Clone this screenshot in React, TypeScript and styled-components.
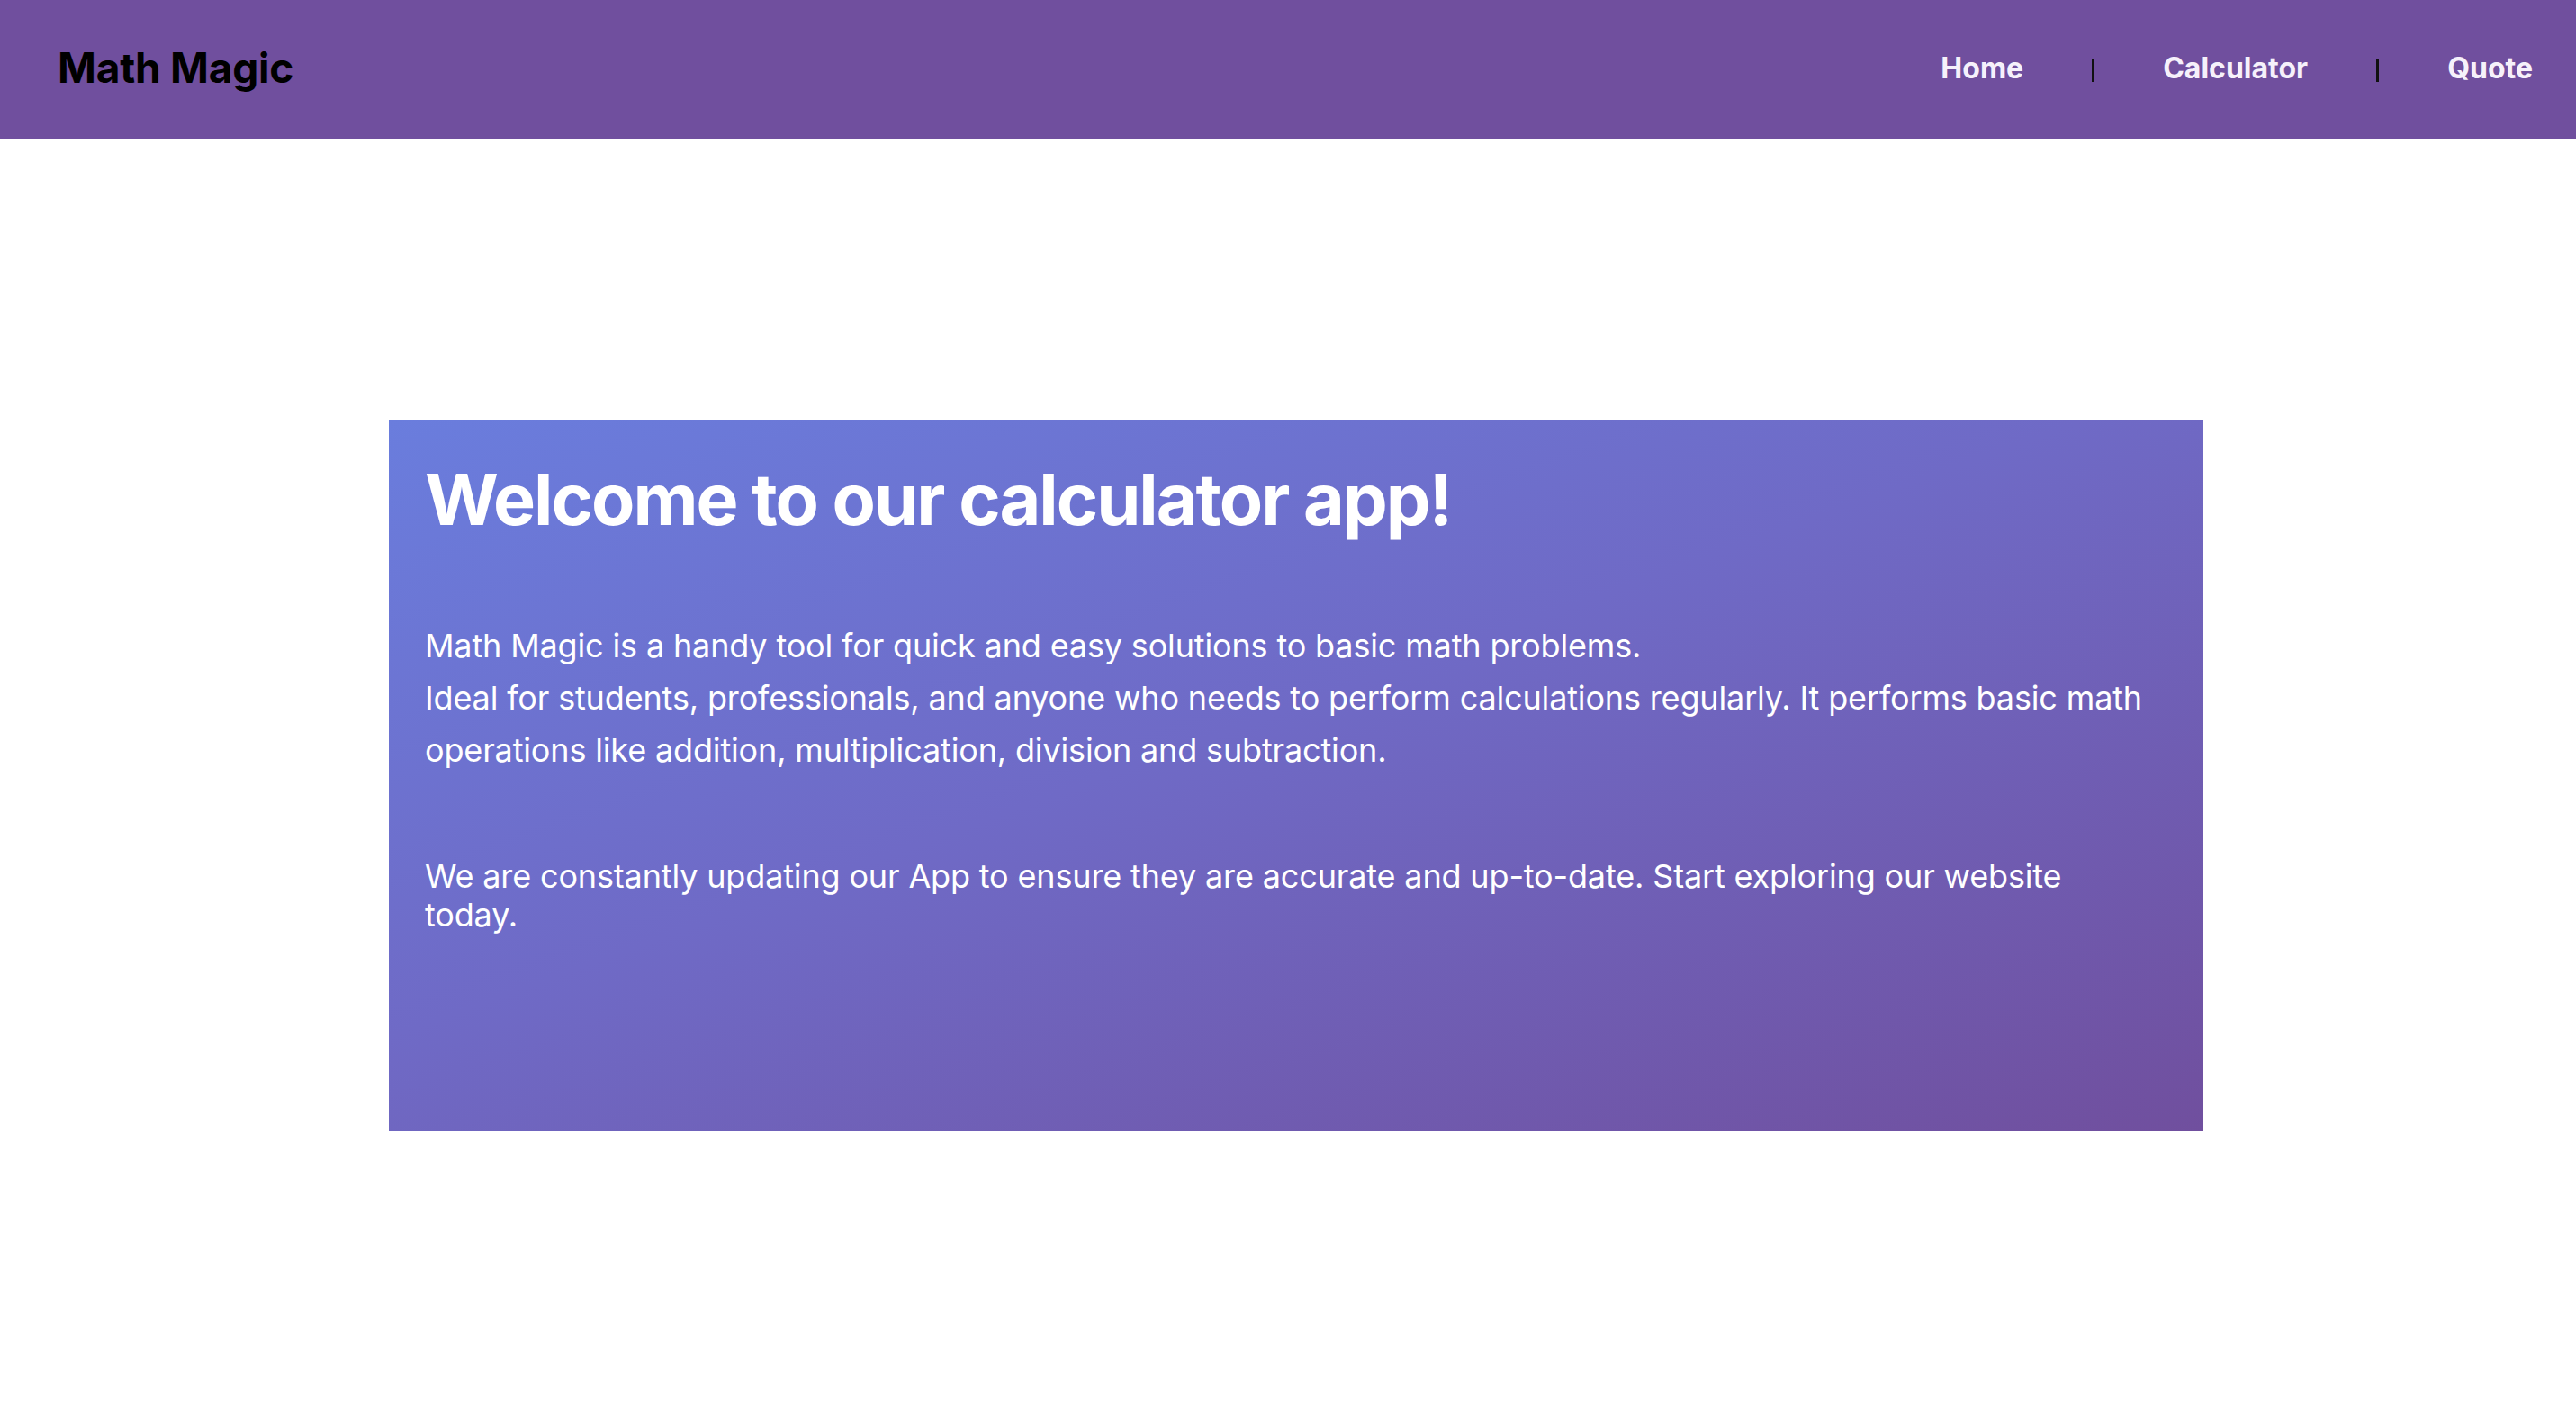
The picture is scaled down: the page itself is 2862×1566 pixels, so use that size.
import React from "react";
import styled, { createGlobalStyle } from "styled-components";

const Global = createGlobalStyle`
  html, body { margin: 0; padding: 0; background: #ffffff; }
  body { font-family: Inter, "Noto Sans", sans-serif; }
`;

const Header = styled.header`
  height: 154px;
  background: #704f9e;
  display: flex;
  align-items: center;
  justify-content: space-between;
  padding: 0 48px 4px 64px;
  box-sizing: border-box;
`;

const Logo = styled.div`
  font-size: 46px;
  font-weight: 700;
  color: #000;
  letter-spacing: -0.2px;
`;

const Nav = styled.nav`
  display: flex;
  align-items: center;
  gap: 76px;
`;

const NavLink = styled.a`
  font-size: 32px;
  font-weight: 700;
  color: #f6f1fb;
  text-decoration: none;
`;

const Sep = styled.span`
  width: 3px;
  height: 26px;
  background: #111;
  margin-top: 6px;
`;

const Main = styled.main`
  padding-top: 313px;
  padding-left: 432px;
`;

const Card = styled.section`
  width: 2016px;
  height: 789px;
  box-sizing: border-box;
  padding: 40px 60px 40px 40px;
  background: linear-gradient(160deg, #6a7ddd 0%, #6f6ac6 45%, #704f9e 100%);
  color: #fff;
`;

const Title = styled.h1`
  margin: 0 0 86px;
  font-size: 79px;
  font-weight: 700;
  letter-spacing: -2px;
  line-height: 1.2;
`;

const Para = styled.p<{ $lh: number; $mb: number }>`
  margin: 0 0 ${(p) => p.$mb}px;
  font-size: 36px;
  font-weight: 400;
  letter-spacing: -0.15px;
  line-height: ${(p) => p.$lh};
`;

export default function App() {
  return (
    <>
      <Global />
      <Header>
        <Logo>Math Magic</Logo>
        <Nav>
          <NavLink href="#">Home</NavLink>
          <Sep />
          <NavLink href="#">Calculator</NavLink>
          <Sep />
          <NavLink href="#">Quote</NavLink>
        </Nav>
      </Header>
      <Main>
        <Card>
          <Title>Welcome to our calculator app!</Title>
          <Para $lh={1.62} $mb={89}>
            Math Magic is a handy tool for quick and easy solutions to basic math problems.
            <br />
            Ideal for students, professionals, and anyone who needs to perform calculations regularly. It performs basic math operations like addition, multiplication, division and subtraction.
          </Para>
          <Para $lh={1.21} $mb={0}>
            We are constantly updating our App to ensure they are accurate and up-to-date. Start exploring our website today.
          </Para>
        </Card>
      </Main>
    </>
  );
}
